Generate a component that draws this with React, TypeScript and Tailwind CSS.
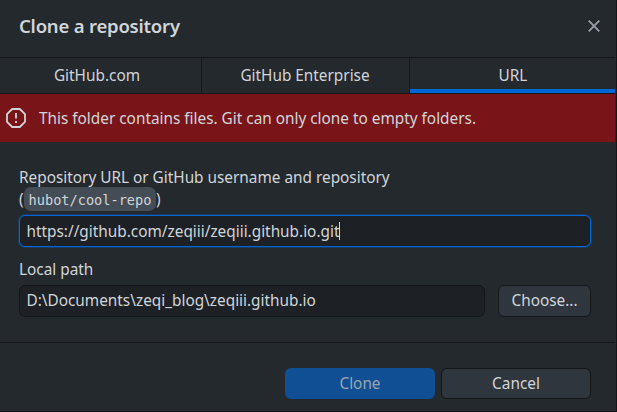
import React from "react";
import { clsx } from "clsx";

const tabs = [
  { label: "GitHub.com", width: "w-[202px]", nudge: "pr-[7px]" },
  { label: "GitHub Enterprise", width: "w-[208px]", nudge: "pr-px" },
  { label: "URL", width: "w-[205px]", nudge: "pl-px" },
];

export default function App() {
  return (
    <div className="flex h-[412px] w-[617px] flex-col overflow-hidden border-r border-b border-[#141619] bg-[#24292d] pr-px font-['Noto_Sans','Open_Sans',sans-serif] text-[15.35px] leading-5 whitespace-nowrap text-[#d1d5da]">
      <header className="flex h-[57px] shrink-0 items-center justify-between pr-[15px] pb-[5px] pl-[19px]">
        <h1 className="pb-px text-[18.5px] font-semibold tracking-[-0.2px]">Clone a repository</h1>
        <svg className="h-3 w-3" viewBox="0 0 12 12" fill="none" stroke="#959da5" strokeWidth="1.9">
          <path d="M.7.7 11.3 11.3M11.3.7.7 11.3" />
        </svg>
      </header>

      <nav className="flex h-[37px] shrink-0 border-y border-[#141619]">
        {tabs.map((tab, i) => (
          <button
            key={tab.label}
            className={clsx("flex flex-col", tab.width, i < 2 && "border-r border-[#141619]")}
          >
            <span className={clsx("flex w-full flex-1 items-center justify-center pt-[2px]", tab.nudge)}>
              {tab.label}
            </span>
            <span className={clsx("h-1 w-full", i === 2 && "bg-[#0366d6]")} />
          </button>
        ))}
      </nav>

      <div className="flex h-12 shrink-0 items-center bg-[#791519] pl-[6px]">
        <svg className="h-5 w-5" viewBox="0 0 20 20" fill="none" stroke="#d1d5da" strokeWidth="1.8">
          <path d="M6.2 1h7.6L19 6.2v7.6L13.8 19H6.2L1 13.8V6.2z" strokeLinejoin="round" />
          <path d="M10 5v5.5M10 13v2" />
        </svg>
        <p className="pl-[13px]">This folder contains files. Git can only clone to empty folders.</p>
      </div>

      <main className="h-[200px] shrink-0 pt-6 pr-6 pl-[19px]">
        <label className="block h-[49px]">
          <span className="block h-[21px] leading-[22px]">Repository URL or GitHub username and repository</span>
          <span className="flex h-6 items-center">
            <span className="w-[5px]">(</span>
            <code className="flex h-6 w-[132px] items-center justify-center rounded-[7px] bg-[#444d56] pt-[2px] font-['DejaVu_Sans_Mono',monospace] text-[13.6px]">
              hubot/cool-repo
            </code>
            <span className="w-[5px]">)</span>
          </span>
        </label>
        <div className="flex h-8 items-center rounded-md border border-[#0366d6] bg-[#1d2125] pl-[6.5px] shadow-[0_0_0_1px_rgba(3,102,214,0.3)]">
          <span>https://github.com/zeqiii/zeqiii.github.io.git</span>
          <span className="h-[18px] w-px bg-[#d1d5da]" />
        </div>
        <label className="mt-[11px] block h-[27px] leading-[22px]">Local path</label>
        <div className="flex justify-between">
          <div className="flex h-8 w-[466px] items-center rounded-md border border-[#141619] bg-[#1d2125] pb-[2px] pl-[6.5px]">
            <span>D:\Documents\zeqi_blog\zeqiii.github.io</span>
          </div>
          <button className="flex h-8 w-[93px] items-center justify-center rounded-md border border-[#141619] bg-[#2f363d] pb-[2px]">
            <span>Choose...</span>
          </button>
        </div>
      </main>

      <footer className="flex flex-1 justify-end gap-[6px] border-t border-[#141619] pt-[25px] pr-6">
        <button className="flex h-[31px] w-[150px] items-center justify-center rounded-md bg-[#104f94] pb-px text-[#9aa5b1]">
          <span>Clone</span>
        </button>
        <button className="flex h-[31px] w-[150px] items-center justify-center rounded-md border border-[#141619] bg-[#2f363d] pb-px">
          <span>Cancel</span>
        </button>
      </footer>
    </div>
  );
}
